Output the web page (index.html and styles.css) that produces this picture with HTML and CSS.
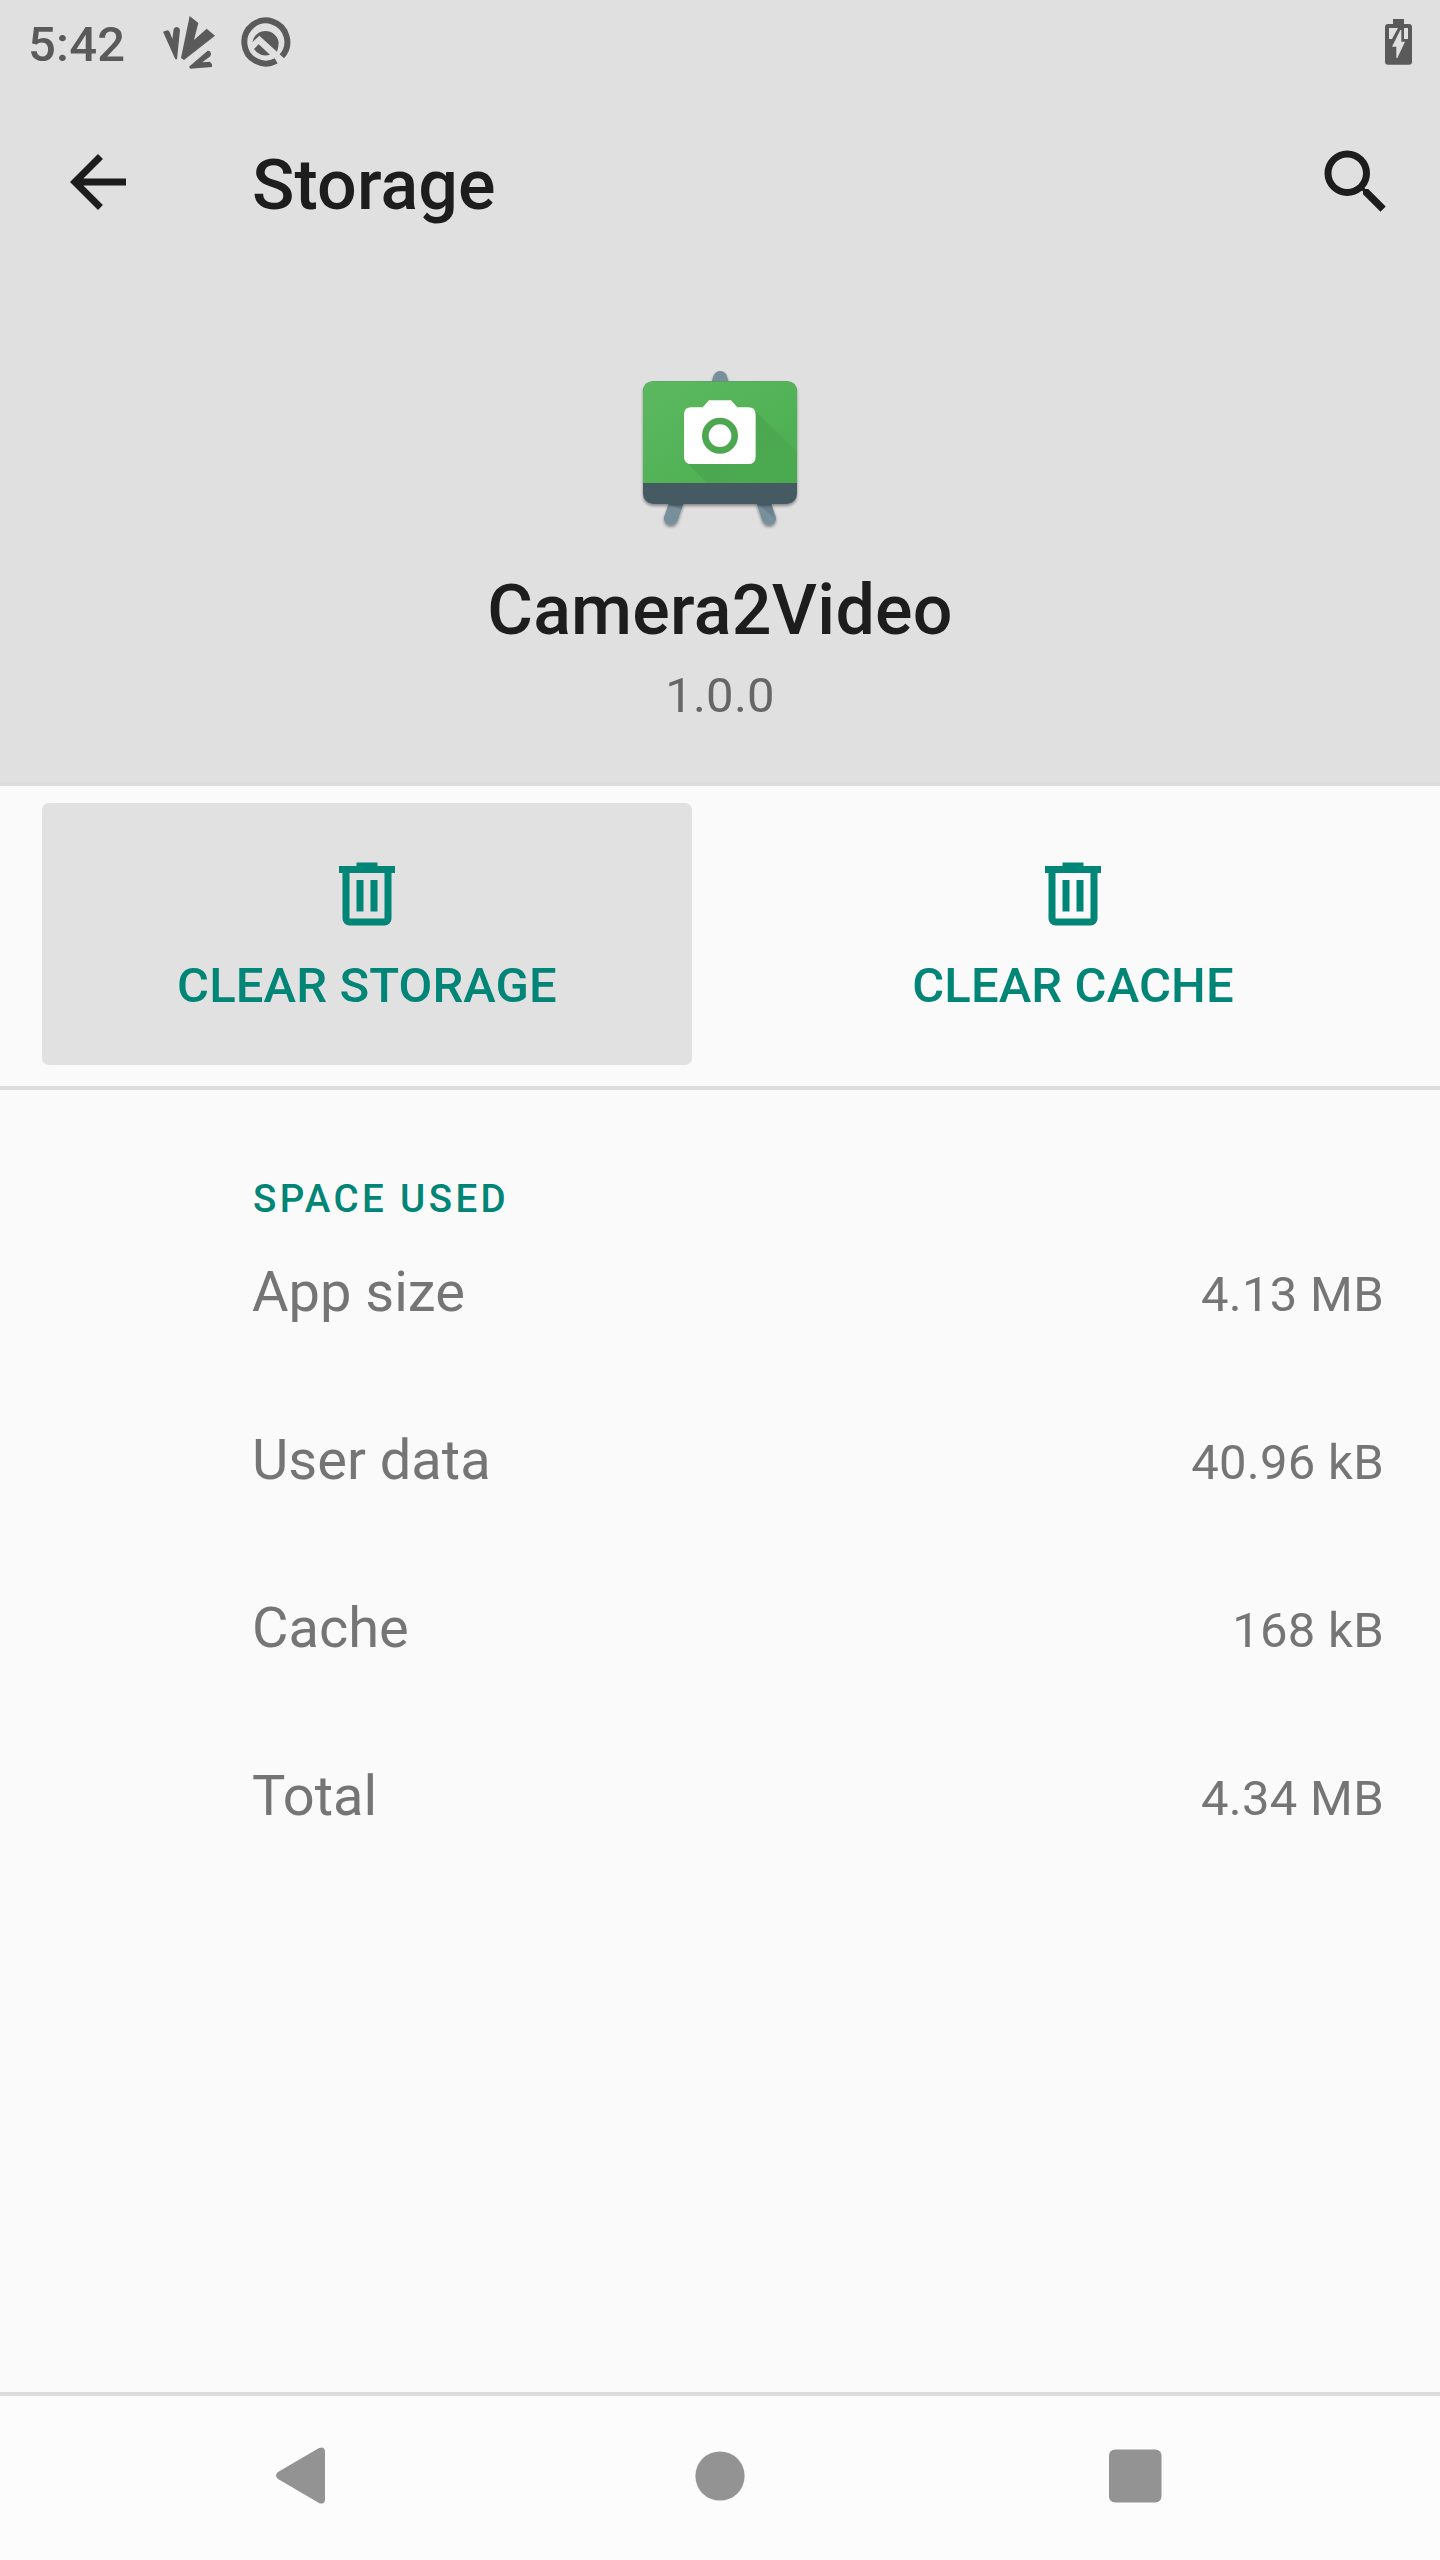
FILE: index.html
```html
<!DOCTYPE html>
<html lang="en">
<head>
<meta charset="utf-8">
<title>Storage</title>
<link rel="stylesheet" href="styles.css">
</head>
<body>
<div class="screen">
  <header class="header">
    <div class="status-bar">
      <span class="clock">5:42</span>
      <svg class="status-leaf" viewBox="486 45 162 165"><path d="M489 95 L502 91 Q508 92 510 98 L517 117 L521 87 Q523 81 531 81 Q539 82 540 90 L531 178 H526Z"/><path d="M569 48 L595 69 L582 120 L620 86 L645 107 L552 180 L543 174Z"/><path d="M567 200 L623 152 Q633 152 633 162 L631 169 L607 187 L630 185 L636 193 V201 L571 206Z"/></svg>
      <svg class="status-q" viewBox="720 48 153 156"><path class="ring" d="M828.500 182.500A64.500 64.500 0 1 1 845.500 169"/><path d="M757 127A40 40 0 0 1 836 127Q836 142 831 155L778 107Z"/><path d="M762 147L776 133L810 164A40 40 0 0 1 762 147Z"/></svg>
      <svg class="battery" viewBox="135 57 81 138"><path fill-rule="evenodd" d="M159 57H192V72H207Q216 72 216 81V185Q216 194 207 194H144Q135 194 135 185V81Q135 72 144 72H159ZM147 84V117H156L174 84ZM192 84V117H204V84Z"/><path class="bolt" d="M181 90H184V125H195L172 174H169V140H156Z"/></svg>
    </div>
    <div class="app-bar">
      <svg class="icon" viewBox="0 0 24 24"><path d="M20 11H7.830l5.590-5.590L12 4l-8 8 8 8 1.410-1.410L7.830 13H20v-2z"/></svg>
      <h1 class="title">Storage</h1>
      <svg class="icon" viewBox="0 0 24 24"><path d="M15.500 14h-.790l-.280-.270A6.471 6.471 0 0 0 16 9.500 6.500 6.500 0 1 0 9.500 16c1.610 0 3.090-.590 4.230-1.570l.270.280v.790l5 4.990L20.490 19l-4.990-5zm-6 0C7.010 14 5 11.990 5 9.500S7.010 5 9.500 5 14 7.010 14 9.500 11.990 14 9.500 14z"/></svg>
    </div>
    <div class="app-info">
      <svg class="app-icon" viewBox="0 0 600 540">
        <defs>
          <linearGradient id="board" x1="0" y1="0" x2="1" y2="1"><stop offset="0" stop-color="#5cb860"/><stop offset="1" stop-color="#4bae4f"/></linearGradient>
          <linearGradient id="cast" x1="0" y1="0" x2="1" y2="1"><stop offset="0" stop-color="#000" stop-opacity=".09"/><stop offset="1" stop-color="#000" stop-opacity=".02"/></linearGradient>
          <filter id="drop" x="-20%" y="-20%" width="140%" height="150%"><feDropShadow dx="0" dy="6" stdDeviation="5" flood-opacity=".4"/></filter>
          <clipPath id="panel"><path d="M69 64H531V369H69Z"/></clipPath>
        </defs>
        <g fill="#78909c" filter="url(#drop)"><path d="M275 66L280 48Q287 33 300 33Q315 33 321 48L326 66Z"/><path d="M147 428H191L174 480Q168 495 153 495Q136 495 132 479V471Z"/><path d="M453 428H409L426 480Q432 495 447 495Q464 495 468 479V471Z"/></g>
        <path d="M147 432H190L184 450Z M412 432H455L463 473Z" fill="#5f7986" opacity=".6"/>
        <rect x="69" y="64" width="462" height="368" rx="31" fill="#455a64" filter="url(#drop)"/>
        <path d="M69 369V95Q69 64 100 64H500Q531 64 531 95V369Z" fill="url(#board)"/>
        <path clip-path="url(#panel)" d="M401 148L531 274V369H260L199 306Z" fill="url(#cast)"/>
        <path d="M192 164Q192 142 214 142H248L267 121H333L352 142H385Q407 142 407 164V290Q407 312 385 312H214Q192 312 192 290Z" fill="#fff"/>
        <circle cx="300" cy="227" r="44" fill="#fff" stroke="#4ca750" stroke-width="20"/>
      </svg>
      <div class="app-name">Camera2Video</div>
      <div class="app-version">1.0.0</div>
    </div>
  </header>
  <div class="actions">
    <div class="action pressed">
      <svg class="trash" viewBox="0 0 56 64"><path fill-rule="evenodd" d="M17.500.500h21V4H56v7H52.500V56.500a7 7 0 0 1-7 7h-35a7 7 0 0 1-7-7V11H0V4H17.500ZM10.500 11V56.500H45.500V11ZM17.500 18h7V49.500h-7ZM31.500 18h7V49.500h-7Z"/></svg>
      <span>CLEAR STORAGE</span>
    </div>
    <div class="action">
      <svg class="trash" viewBox="0 0 56 64"><path fill-rule="evenodd" d="M17.500.500h21V4H56v7H52.500V56.500a7 7 0 0 1-7 7h-35a7 7 0 0 1-7-7V11H0V4H17.500ZM10.500 11V56.500H45.500V11ZM17.500 18h7V49.500h-7ZM31.500 18h7V49.500h-7Z"/></svg>
      <span>CLEAR CACHE</span>
    </div>
  </div>
  <main class="usage">
    <h2 class="section-title">SPACE USED</h2>
    <div class="row"><span class="label">App size</span><span class="value">4.13 MB</span></div>
    <div class="row"><span class="label">User data</span><span class="value">40.96 kB</span></div>
    <div class="row"><span class="label">Cache</span><span class="value">168 kB</span></div>
    <div class="row"><span class="label">Total</span><span class="value">4.34 MB</span></div>
  </main>
  <nav class="nav-bar">
    <svg class="nav-back" viewBox="0 0 49 57"><path d="M43 1Q49-1 49 5V52Q49 58 43 56L2 32Q-2 28.500 2 25Z"/></svg>
    <svg class="nav-home" viewBox="0 0 50 50"><circle cx="25" cy="25" r="24.600"/></svg>
    <svg class="nav-recent" viewBox="0 0 53 54"><rect y=".500" width="52.500" height="53" rx="6"/></svg>
  </nav>
</div>
</body>
</html>
```
FILE: styles.css
```css
* { box-sizing: border-box; }
body { margin: 0; background: #fafafa; }
svg { display: block; flex: none; }
h1, h2 { margin: 0; }
.screen {
  width: 1440px;
  height: 2560px;
  display: flex;
  flex-direction: column;
  font-family: Roboto, sans-serif;
  color: #1d1d1d;
  background: #fafafa;
}
.header { height: 786px; background: #e0e0e0; border-bottom: 4px solid #dadce0; }
.status-bar { display: flex; height: 84px; padding: 0 28px; color: #5a5a5a; fill: #5a5a5a; }
.clock { width: 134px; padding-top: 15px; font-size: 49px; font-weight: 500; line-height: 60px; letter-spacing: 0.2px; }
.status-leaf { width: 54px; height: 55px; margin-top: 15px; }
.status-q { width: 51px; height: 52px; margin: 16px 0 0 24px; }
.ring { fill: none; stroke: #5a5a5a; stroke-width: 18; }
.battery { width: 27px; height: 46px; margin: 19px 0 0 auto; }
.bolt { fill: #e0e0e0; }
.app-bar { display: flex; align-items: center; height: 196px; padding: 0 42px 0 56px; }
.icon { width: 84px; height: 84px; fill: #1d1d1d; }
.title { flex: 1; padding: 6px 0 0 112px; font-size: 70px; font-weight: 500; line-height: 82px; letter-spacing: 0.1px; }
.app-info { display: flex; flex-direction: column; align-items: center; padding-top: 80px; }
.app-icon { width: 200px; height: 180px; }
.app-name { margin-top: 29px; font-size: 70px; font-weight: 500; line-height: 82px; letter-spacing: 0.25px; }
.app-version { margin-top: 15px; font-size: 49px; line-height: 60px; letter-spacing: 0.25px; color: #666; }
.actions { display: flex; gap: 56px; height: 304px; padding: 17px 42px 21px; border-bottom: 4px solid #dadce0; }
.action {
  flex: 1;
  display: flex;
  flex-direction: column;
  align-items: center;
  gap: 30px;
  padding-top: 59px;
  border-radius: 7px;
  color: #008577;
  font-size: 49px;
  font-weight: 500;
  line-height: 60px;
  letter-spacing: 0.12px;
}
.pressed { background: #e1e1e1; }
.trash { width: 56px; height: 64px; fill: #008577; }
.usage { flex: 1; padding: 84px 56px 0 252px; color: #757575; }
.section-title { padding-left: 1px; color: #008577; font-size: 38.5px; font-weight: 500; line-height: 50px; letter-spacing: 3.4px; }
.row { display: flex; justify-content: space-between; align-items: baseline; height: 168px; padding-top: 33px; line-height: 70px; }
.label { font-size: 56px; }
.value { font-size: 49px; letter-spacing: 0.28px; }
.nav-bar {
  display: flex;
  justify-content: space-between;
  align-items: center;
  height: 168px;
  padding: 0 278px 5px 276px;
  border-top: 4px solid #dcdcdc;
  background: #fcfcfc;
  fill: #939393;
}
.nav-back { width: 49px; height: 57px; }
.nav-home { width: 50px; height: 50px; margin-left: 6px; }
.nav-recent { width: 53px; height: 54px; }
```
